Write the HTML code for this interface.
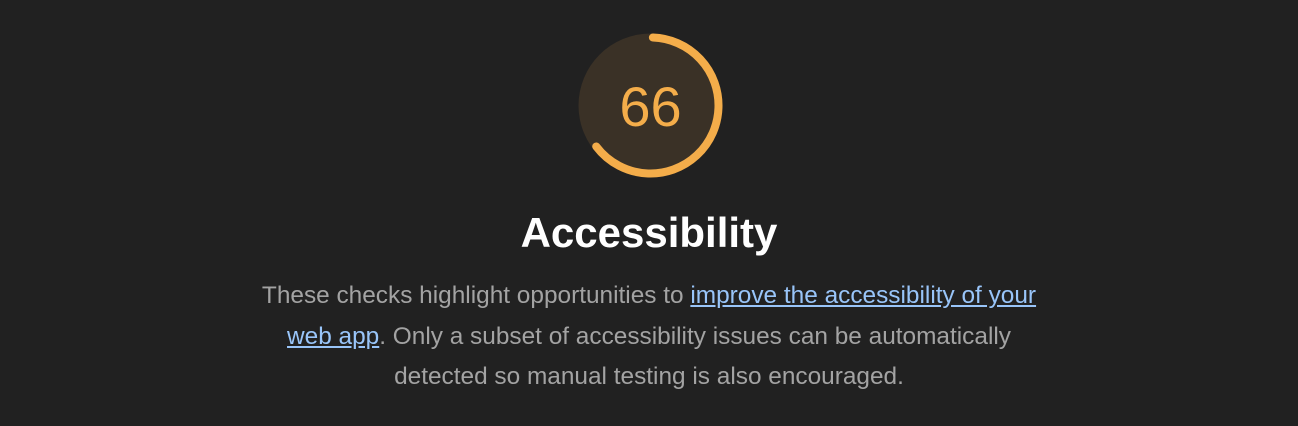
<!DOCTYPE html>
<html><head><style>
html,body{margin:0;padding:0;background:#212121;width:1298px;height:426px;overflow:hidden}
.g{position:absolute;left:578px;top:33px;width:145px;height:145px}
h1{position:absolute;top:205px;left:0;width:1298px;margin:0;text-align:center;font:bold 42px/56px "Liberation Sans",sans-serif;color:#fff}
p{position:absolute;top:276px;left:149px;width:1000px;margin:0;text-align:center;font:24.4px/40.5px "Liberation Sans",sans-serif;color:#a3a3a3;white-space:nowrap}
a{color:#99c5f9;text-decoration:underline}
</style></head><body>
<svg class="g" viewBox="0 0 145 145">
<circle cx="72.5" cy="72.5" r="72" fill="#3a3126"/>
<circle cx="72.5" cy="72.5" r="68" fill="none" stroke="#f4ad4a" stroke-width="8" stroke-linecap="round" stroke-dasharray="274 1000" transform="rotate(-88 72.5 72.5)"/>
<text x="72.5" y="93" text-anchor="middle" font-family="Liberation Sans, DejaVu Sans, sans-serif" font-size="56" fill="#f4ad4a">66</text>
</svg>
<h1>Accessibility</h1>
<p>These checks highlight opportunities to <a>improve the accessibility of your</a><br><a>web app</a>. Only a subset of accessibility issues can be automatically<br>detected so manual testing is also encouraged.</p>
</body></html>
